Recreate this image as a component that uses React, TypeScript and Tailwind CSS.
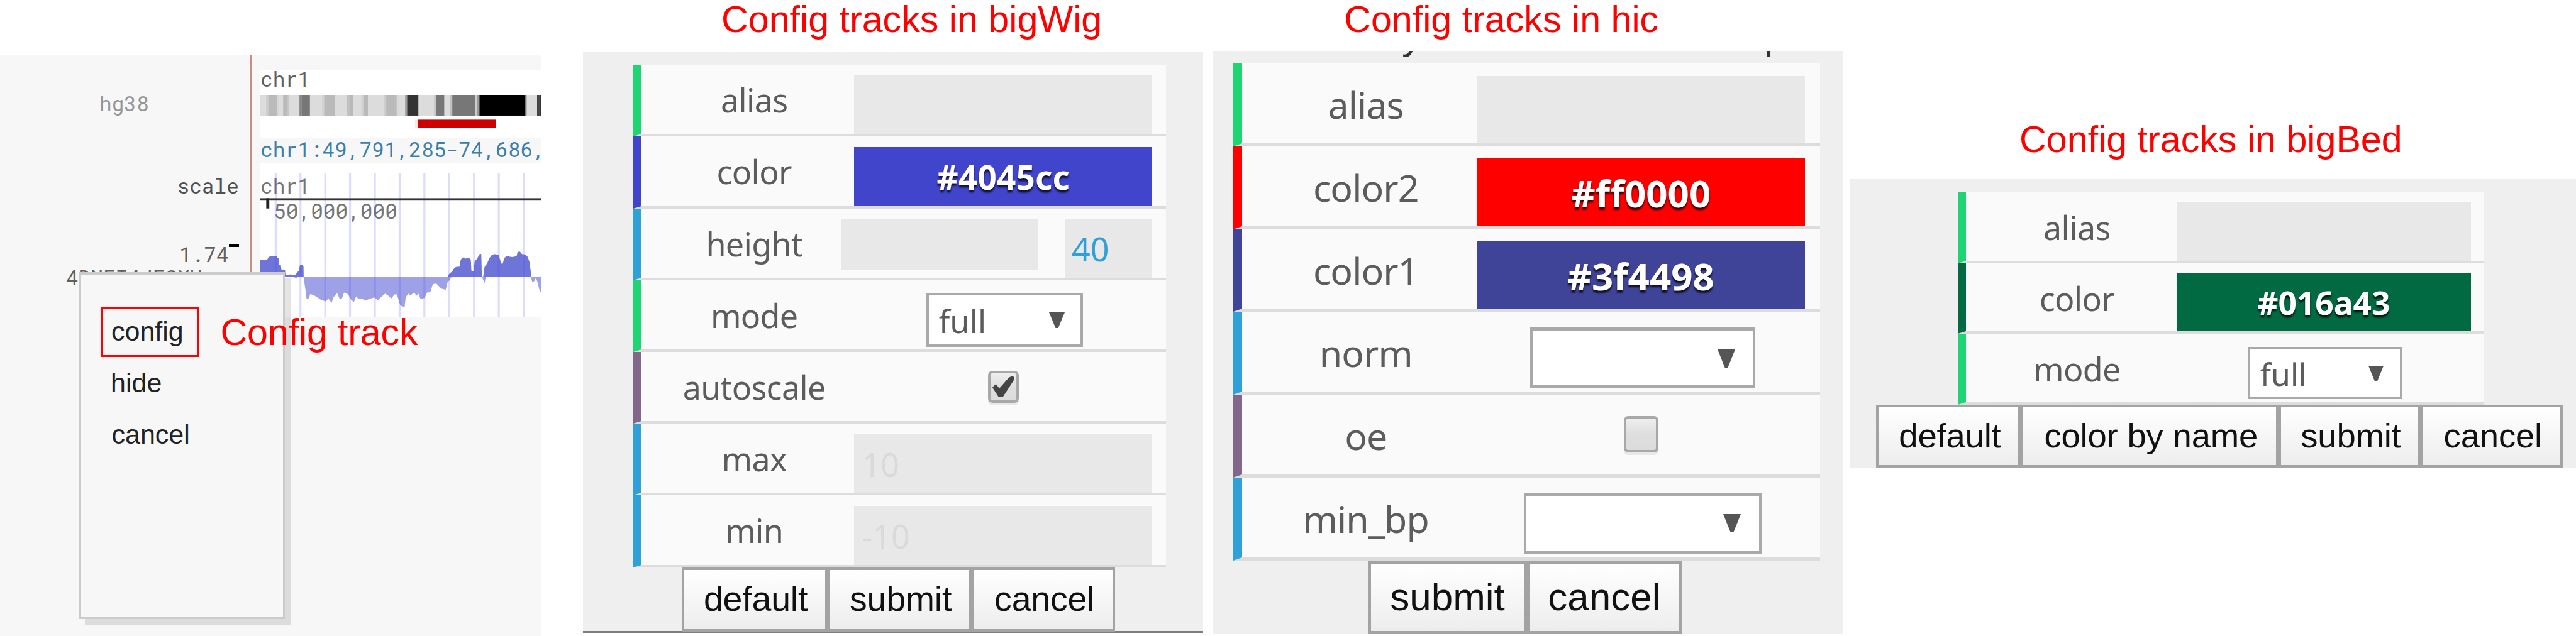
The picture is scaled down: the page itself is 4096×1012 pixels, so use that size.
import React from 'react';

type Theme = {
  row: string;
  labelCell: string;
  label: string;
  field: string;
  hexText: string;
  numText: string;
  form: string;
  button: string;
};

const bigWig: Theme = {
  form: 'ml-[80.4px] w-[846.5px]',
  row: 'h-[114.2px] border-l-[13px] border-b-[4px]',
  labelCell: 'w-[338px] pl-[19.6px]',
  label: 'text-[52px] leading-[112.6px] tracking-[-0.7px]',
  field: 'mt-[16.4px] w-[473.9px]',
  hexText: 'text-[53px] leading-[96px] tracking-[0.2px]',
  numText: 'text-[52px] leading-[96.6px]',
  button: 'h-[102px] border-[4px] pl-[3px] text-[55.5px] leading-[87.4px] tracking-[-0.2px]',
};

const hic: Theme = {
  form: 'ml-[32.6px] w-[932.8px]',
  row: 'h-[131.75px] border-l-[14px] border-b-[5px]',
  labelCell: 'w-[373.3px] pl-[20.3px]',
  label: 'text-[59px] leading-[131px] tracking-[-0.9px]',
  field: 'mt-[19.6px] w-[521.6px]',
  hexText: 'text-[60px] leading-[110px]',
  numText: 'text-[60px] leading-[110px]',
  button: 'h-[117.7px] border-[5px] text-[62px] leading-[102px]',
};

const bigBed: Theme = {
  form: 'ml-[170.7px] w-[836.6px]',
  row: 'h-[112.7px] border-l-[13px] border-b-[4px]',
  labelCell: 'w-[335.3px] pl-[18px]',
  label: 'text-[52px] leading-[111px] tracking-[-0.7px]',
  field: 'mt-[16.4px] w-[467.6px]',
  hexText: 'text-[51.5px] leading-[93.6px]',
  numText: 'text-[52px] leading-[93.6px]',
  button: 'h-[100.4px] border-[4px] pl-[4px] text-[54.5px] leading-[86px] tracking-[-0.2px]',
};

const GREEN = 'border-l-[#1fd472]';
const BLUE = 'border-l-[#2fa0d8]';
const PURPLE = 'border-l-[#82678a]';

function Row({ theme, stripe, label, children }: { theme: Theme; stripe: string; label: string; children: React.ReactNode }) {
  return (
    <div className={`flex items-stretch border-b-[#dcdcdc] bg-[#fafafa] ${theme.row} ${stripe}`}>
      <div className={`shrink-0 text-center whitespace-nowrap text-[#5c5c5c] ${theme.labelCell} ${theme.label}`}>{label}</div>
      {children}
    </div>
  );
}

function Field({ theme, text }: { theme: Theme; text?: string }) {
  return (
    <div className={`overflow-hidden bg-[#e8e8e8] pl-[12px] text-[#dadada] ${theme.field} ${theme.numText}`}>{text}</div>
  );
}

function ColorField({ theme, bg, text }: { theme: Theme; bg: string; text: string }) {
  return (
    <div
      className={`overflow-hidden text-center font-bold text-white [text-shadow:0_4px_3px_rgba(0,0,0,0.75)] ${bg} ${theme.field} ${theme.hexText}`}
    >
      {text}
    </div>
  );
}

function Select({ box, arrow, text, textClass }: { box: string; arrow: string; text?: string; textClass?: string }) {
  return (
    <div className={`flex justify-between border-[#a9a9a9] bg-white text-[#5c5c5c] ${box}`}>
      <span className={textClass}>{text}</span>
      <svg viewBox="0 0 24 24" preserveAspectRatio="none" className={arrow}>
        <path d="M0 0H24L14 24H10Z" fill="#555" />
      </svg>
    </div>
  );
}

function CheckBox({ box, checked }: { box: string; checked?: boolean }) {
  return (
    <div
      className={`rounded-[7px] border-[4px] border-[#a8a8a8] bg-linear-to-b from-[#eeeeee] via-[#dedede] to-[#dcdcdc] shadow-[0_4px_0_#e8e8e8] ${box}`}
    >
      {checked && (
        <svg viewBox="4 4 41 43" className="h-[43px] w-[41px]">
          <path d="M7 26.5L12.5 21L18 28L33 11L37 8.7L41 9.4V15L24 41L17 42Z" fill="#444" />
        </svg>
      )}
    </div>
  );
}

function Button({ theme, width, children }: { theme: Theme; width: string; children: React.ReactNode }) {
  return (
    <button
      className={`shrink-0 border-[#a3a3a3] bg-linear-to-b from-white to-[#ededed] text-center whitespace-nowrap text-[#111] font-['Liberation_Sans',sans-serif] ${theme.button} ${width}`}
    >
      {children}
    </button>
  );
}

function Title({ className, children }: { className: string; children: React.ReactNode }) {
  return (
    <h2 className={`text-[59.2px] leading-[61px] whitespace-nowrap text-[#ff0000] font-['Liberation_Sans',sans-serif] ${className}`}>
      {children}
    </h2>
  );
}

const bands: [number, number, string][] = [
  [46, 59, '#cacaca'], [59, 103, '#bababa'], [103, 113, '#d6d6d6'], [138, 160, '#bababa'], [160, 170, '#c6c6c6'],
  [227, 238, '#858585'], [238, 284, '#777'], [351, 362, '#d0d0d0'], [362, 419, '#bababa'], [487, 498, '#c0c0c0'],
  [498, 519, '#bababa'], [565, 576, '#cfcfcf'], [576, 600, '#bababa'], [689, 700, '#cdcdcd'], [700, 757, '#bababa'],
  [757, 767, '#d8d8d8'], [803, 814, '#999'], [814, 871, '#333'], [871, 881, '#b4b4b4'], [960, 971, '#cacaca'],
  [971, 1016, '#777'], [1049, 1060, '#c0c0c0'], [1060, 1184, '#777'], [1184, 1195, '#ccc'], [1195, 1208, '#999'],
  [1208, 1454, '#000'], [1454, 1465, '#777'], [1522, 1533, '#444'], [1533, 1546, '#333'],
];

const gridLines = [97.5, 232.5, 367.5, 502.5, 638, 773, 908, 1043.5, 1178.5, 1313.5, 1449];

const upArea =
  'M14 1184V1092H50L59 1076L70 1071H103L107 1082H113L116 1117H125L129 1145H148L151 1174H170L176 1170L184 1175H205L214 1160L224 1150L230 1120L238 1117L249 1125L250 1184Z' +
  'M1038 1184V1174L1049 1163L1060 1155L1066 1142L1080 1130L1100 1128L1106 1090L1120 1078L1130 1085L1151 1081L1161 1090L1164 1150L1175 1155L1182 1100L1195 1085L1210 1058L1218 1060L1221 1184Z' +
  'M1228 1184L1236 1130L1250 1110L1262 1082L1276 1064L1290 1060L1313 1064L1320 1090L1332 1120L1344 1080L1356 1071L1385 1076L1410 1072L1416 1048L1428 1046L1440 1060L1458 1062L1470 1074L1480 1100L1490 1172L1492 1184Z';

const downArea =
  'M196 1184H218L210 1194ZM249 1184L262 1270L266 1306L280 1300L285 1278L303 1283L330 1300L345 1310L370 1318L385 1302L402 1326L412 1296L432 1272L446 1304L458 1304L470 1270L492 1280L508 1308L524 1322L536 1290L548 1303L570 1306L590 1312L612 1303L636 1296L654 1312L668 1298L694 1276L710 1286L728 1302L744 1280L758 1280L768 1312L776 1340L800 1350L806 1296L820 1276L832 1286L852 1268L864 1288L876 1276L886 1304L908 1300L922 1270L940 1268L954 1224L972 1220L1000 1248L1024 1254L1034 1214L1046 1200L1056 1184Z' +
  'M1221 1184L1236 1218L1243 1184ZM1488 1184L1496 1212L1506 1208L1516 1190L1524 1212L1538 1268H1546V1184Z';

const mono = "text-[32.8px] leading-[40px] whitespace-pre font-['Roboto_Mono','DejaVu_Sans_Mono',monospace]";

function Browser() {
  return (
    <section className="relative mt-[88px] flex h-[924px] w-[861px] shrink-0 bg-[#f7f7f7]">
      <div className={`flex w-[397.5px] shrink-0 flex-col ${mono}`}>
        <div className="mt-[57px] pl-[158px] text-[#959595]">hg38</div>
        <div className="mt-[91px] pl-[281.5px] text-[#505050]">scale</div>
        <div className="mt-[69px] flex pl-[285px] text-[#606060]">
          1.74<span className="mt-[4px] h-[3.5px] w-[16.5px] bg-black" />
        </div>
        <div className="-mt-[3px] pl-[105px] text-[#606060]">4DNFI4JFSXU</div>
      </div>
      <div className="h-[417px] w-[3.3px] shrink-0 bg-[#c49086]" />
      <div className="ml-[13.3px] flex w-[447px] flex-col overflow-hidden">
        <div className="mt-[23px] h-[109px] shrink-0 bg-white">
          <div className={`-mt-[5px] h-[44.5px] text-[#606060] ${mono}`}>chr1</div>
          <svg viewBox="14 192 1532 181" preserveAspectRatio="none" className="block h-[52.8px] w-[447px]">
            <rect x="14" y="192" width="1532" height="113" fill="#dcdcdc" />
            {bands.map(([a, b, c]) => (
              <rect key={a} x={a} y="192" width={b - a} height="113" fill={c} />
            ))}
            <rect x="857" y="327" width="14" height="46" fill="#fae6e6" />
            <rect x="871" y="327" width="427" height="46" fill="#cc0000" />
          </svg>
        </div>
        <div className={`h-[39.5px] shrink-0 text-[#3a80ab] ${mono}`}>
          <div className="-mt-[2.4px]">chr1:49,791,285-74,686,</div>
        </div>
        <div className="relative h-[245.8px] shrink-0 bg-white">
          <div className={`absolute top-[16.8px] left-0 text-[#757575] ${mono}`}>chr1</div>
          <div className={`absolute top-[56px] left-[21px] text-[#757575] ${mono}`}>50,000,000</div>
          <svg viewBox="14 565 1532 843" preserveAspectRatio="none" className="relative block h-[245.8px] w-[447px]">
            <path d={upArea} fill="#6f74d9" />
            <path d={downArea} fill="#9fa1e6" />
            {gridLines.map((x) => (
              <rect key={x} x={x - 5.5} y="619" width="11" height="789" fill="#4646ff" fillOpacity="0.19" />
            ))}
            <rect x="14" y="755" width="1532" height="13" fill="#333" />
            <rect x="46" y="755" width="13" height="56" fill="#222" />
            <rect x="59" y="768" width="10" height="43" fill="#ccc" />
          </svg>
        </div>
      </div>

      <div className="absolute top-[345px] left-[125px] flex h-[552px] w-[328px] flex-col border-x-[3px] border-y-[4px] border-[#cbcbcb] bg-[#f7f7f7] pt-[52px] text-[43px] leading-[82px] text-[#222] shadow-[10px_10px_0_rgba(0,0,0,0.105)] font-['Liberation_Sans',sans-serif]">
        <div className="ml-[33px] h-[79px] w-[156px] border-[3px] border-[#ff0000] pl-[13px] leading-[70px]">config</div>
        <div className="pl-[48px]">hide</div>
        <div className="pl-[49.5px]">cancel</div>
      </div>
      <Title className="absolute top-[410.3px] left-[350.5px] tracking-[-0.15px]">Config track</Title>
    </section>
  );
}

function BigWigPanel() {
  const t = bigWig;
  return (
    <section className="ml-[66px] w-[985.7px] shrink-0">
      <Title className="h-[82px] pl-[220px]">Config tracks in bigWig</Title>
      <div className="h-[926.3px] border-b-[4px] border-[#7c7c7c] bg-[#efefef] pt-[21.2px]">
        <div className={t.form}>
          <Row theme={t} stripe={GREEN} label="alias">
            <Field theme={t} />
          </Row>
          <Row theme={t} stripe="border-l-[#4045cc]" label="color">
            <ColorField theme={t} bg="bg-[#4045cc]" text="#4045cc" />
          </Row>
          <Row theme={t} stripe={BLUE} label="height">
            <div className="mt-[16.6px] -ml-[20.3px] h-[80.5px] w-[313.2px] shrink-0 bg-[#e8e8e8]" />
            <div className={`mt-[16.4px] ml-[41.8px] w-[139.2px] bg-[#e8e8e8] pl-[11px] text-[#2fa0d8] ${t.numText}`}>40</div>
          </Row>
          <Row theme={t} stripe={GREEN} label="mode">
            <Select
              box="mt-[20.6px] ml-[114.4px] h-[85.2px] w-[249.7px] border-[4px]"
              arrow="mt-[26.5px] mr-[25.5px] h-[25px] w-[25px]"
              text="full"
              textClass="pl-[16px] text-[51px] leading-[80px]"
            />
          </Row>
          <Row theme={t} stripe={PURPLE} label="autoscale">
            <CheckBox box="mt-[29.6px] ml-[213.1px] h-[51px] w-[49px]" checked />
          </Row>
          <Row theme={t} stripe={BLUE} label="max">
            <Field theme={t} text="10" />
          </Row>
          <Row theme={t} stripe={BLUE} label="min">
            <Field theme={t} text="-10" />
          </Row>
        </div>
        <div className="flex pl-[156.9px]">
          <Button theme={t} width="w-[232.3px]">default</Button>
          <Button theme={t} width="w-[228.8px]">submit</Button>
          <Button theme={t} width="w-[228.5px]">cancel</Button>
        </div>
      </div>
    </section>
  );
}

function HicPanel() {
  const t = hic;
  return (
    <section className="ml-[15.7px] w-[1002px] shrink-0">
      <Title className="h-[81px] pl-[208.8px]">Config tracks in hic</Title>
      <div className="h-[928.3px] bg-[#efefef]">
        <div className="flex h-[20.1px] overflow-hidden text-[63px] leading-[60px] text-[#333] font-['Liberation_Sans',sans-serif]">
          <span className="-mt-[55.4px] ml-[300.6px] w-[576.4px]">y</span>
          <span className="-mt-[55.4px]">p</span>
        </div>
        <div className={t.form}>
          <Row theme={t} stripe={GREEN} label="alias">
            <Field theme={t} />
          </Row>
          <Row theme={t} stripe="border-l-[#ff0000]" label="color2">
            <ColorField theme={t} bg="bg-[#ff0000]" text="#ff0000" />
          </Row>
          <Row theme={t} stripe="border-l-[#3f4498]" label="color1">
            <ColorField theme={t} bg="bg-[#3f4498]" text="#3f4498" />
          </Row>
          <Row theme={t} stripe={BLUE} label="norm">
            <Select
              box="mt-[24.4px] ml-[84.3px] h-[97.4px] w-[358.9px] border-x-[4px] border-y-[5px]"
              arrow="mt-[30px] mr-[28.7px] h-[29px] w-[28px]"
            />
          </Row>
          <Row theme={t} stripe={PURPLE} label="oe">
            <CheckBox box="mt-[34px] ml-[233.4px] h-[58px] w-[55.6px]" />
          </Row>
          <Row theme={t} stripe={BLUE} label="min_bp">
            <Select
              box="mt-[24.6px] ml-[75.2px] h-[97.4px] w-[377.1px] border-x-[4px] border-y-[5px]"
              arrow="mt-[29px] mr-[28.7px] h-[29px] w-[28px]"
            />
          </Row>
        </div>
        <div className="flex pl-[247px]">
          <Button theme={t} width="w-[252.3px]">submit</Button>
          <Button theme={t} width="w-[246.5px]">cancel</Button>
        </div>
      </div>
    </section>
  );
}

function BigBedPanel() {
  const t = bigBed;
  return (
    <section className="ml-[11.7px] w-[1154px] shrink-0 pt-[190.6px]">
      <Title className="h-[94.2px] pl-[269px]">Config tracks in bigBed</Title>
      <div className="h-[459.7px] bg-[#efefef] pt-[21.2px]">
        <div className={t.form}>
          <Row theme={t} stripe={GREEN} label="alias">
            <Field theme={t} />
          </Row>
          <Row theme={t} stripe="border-l-[#016a43]" label="color">
            <ColorField theme={t} bg="bg-[#016a43]" text="#016a43" />
          </Row>
          <Row theme={t} stripe={GREEN} label="mode">
            <Select
              box="mt-[20.4px] ml-[112.8px] h-[83.5px] w-[246.4px] border-[4px]"
              arrow="mt-[26px] mr-[26px] h-[24.7px] w-[24px]"
              text="full"
              textClass="pl-[16px] text-[50px] leading-[78.6px]"
            />
          </Row>
        </div>
        <div className="flex pl-[41.4px]">
          <Button theme={t} width="w-[230px]">default</Button>
          <Button theme={t} width="w-[409.7px]">color by name</Button>
          <Button theme={t} width="w-[225.5px]">submit</Button>
          <Button theme={t} width="w-[226.3px]">cancel</Button>
        </div>
      </div>
    </section>
  );
}

export default function App() {
  return (
    <main className="flex h-[1012px] w-[4096px] items-start overflow-hidden bg-white font-['Noto_Sans',sans-serif]">
      <Browser />
      <BigWigPanel />
      <HicPanel />
      <BigBedPanel />
    </main>
  );
}
